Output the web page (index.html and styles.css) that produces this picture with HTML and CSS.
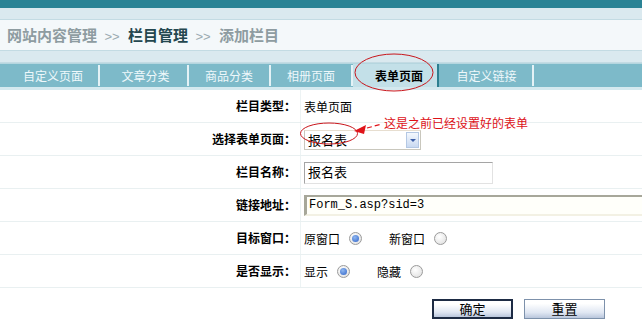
FILE: index.html
```html
<!DOCTYPE html>
<html lang="zh-CN">
<head>
    <meta charset="UTF-8">
    <title>添加栏目</title>
    <link rel="stylesheet" href="styles.css">
</head>
<body>
    <div class="topbar"></div>
    <div class="band"></div>
    <div class="crumb">
        <span class="crumb-muted">网站内容管理</span>
        <span class="crumb-sep">&gt;&gt;</span>
        <span class="crumb-current">栏目管理</span>
        <span class="crumb-sep">&gt;&gt;</span>
        <span class="crumb-muted">添加栏目</span>
    </div>
    <div class="band"></div>
    <div class="tabs">
        <div class="tab t1">自定义页面</div>
        <div class="tab t2">文章分类</div>
        <div class="tab t3">商品分类</div>
        <div class="tab t4">相册页面</div>
        <div class="tab t5 active">表单页面</div>
        <div class="tab t6">自定义链接</div>
    </div>

    <div class="form">
        <div class="row">
            <div class="label">栏目类型：</div>
            <div class="value">表单页面</div>
        </div>
        <div class="row">
            <div class="label">选择表单页面：</div>
            <div class="value">
                <div class="select">
                    <span class="select-text">报名表</span>
                    <span class="select-btn"></span>
                </div>
            </div>
        </div>
        <div class="row">
            <div class="label">栏目名称：</div>
            <div class="value"><div class="input name">报名表</div></div>
        </div>
        <div class="row">
            <div class="label">链接地址：</div>
            <div class="value"><div class="input link">Form_S.asp?sid=3</div></div>
        </div>
        <div class="row">
            <div class="label">目标窗口：</div>
            <div class="value">
                <span class="opt">原窗口</span><span class="radio checked"></span>
                <span class="opt">新窗口</span><span class="radio"></span>
            </div>
        </div>
        <div class="row">
            <div class="label">是否显示：</div>
            <div class="value">
                <span class="opt">显示</span><span class="radio checked"></span>
                <span class="opt">隐藏</span><span class="radio"></span>
            </div>
        </div>
        <div class="actions">
            <button class="btn default">确定</button>
            <button class="btn">重置</button>
        </div>
    </div>

    <div class="note">这是之前已经设置好的表单</div>
    <svg class="marks" width="642" height="324" viewBox="0 0 642 324">
        <ellipse cx="394" cy="72.5" rx="39" ry="18.5" fill="none" stroke="#c8151b" stroke-width="1"/>
        <ellipse cx="329" cy="133.5" rx="28.5" ry="10.5" fill="none" stroke="#c8151b" stroke-width="1"/>
        <polygon points="354,131 366,125 364,134" fill="#e0141a"/>
        <line x1="367" y1="128" x2="382" y2="124" stroke="#e0141a" stroke-width="1.2" stroke-dasharray="5 3"/>
    </svg>
</body>
</html>
```
FILE: styles.css
```css
body {
    margin: 0;
    font-family: "Noto Sans CJK SC", "Liberation Sans", sans-serif;
    font-size: 12px;
    color: #000;
    background: #fff;
    position: relative;
    width: 642px;
    height: 324px;
    overflow: hidden;
}
.topbar {
    height: 8px;
    background-color: #2a8395;
}
.band {
    height: 11px;
    background-color: #dae9ef;
    border-bottom: 1px solid #c3dbe3;
}
.crumb {
    height: 30px;
    line-height: 29px;
    background-color: #f4f8fa;
    border-bottom: 1px solid #c3dbe3;
    padding-left: 7px;
    font-size: 15px;
    font-weight: bold;
    white-space: nowrap;
}
.crumb-muted {
    color: #8e9ca1;
}
.crumb-sep {
    color: #9aaab0;
    font-weight: normal;
    font-family: "Liberation Sans", sans-serif;
    margin: 0 5px 0 4px;
    font-size: 13px;
}
.crumb-current {
    color: #24474f;
}
.tabs {
    display: flex;
    height: 23px;
    background-color: #7dbac9;
    border-top: 1px solid #b5d6df;
    border-bottom: 3px solid #d4e9ef;
}
.tab {
    color: #eef8fb;
    text-align: center;
    border-right: 2px solid #e4f2f6;
    margin: 1px 0;
    line-height: 21px;
    box-sizing: border-box;
}
.t1 { width: 100px; padding-left: 8px; }
.t2 { width: 89px; padding-left: 4px; }
.t3 { width: 82px; }
.t4 { width: 82px; }
.t5 { width: 86px; }
.t6 { width: 95px; padding-left: 2px; }
.tab.active {
    background-color: #c3e0e8;
    color: #000;
    font-weight: bold;
    border-right: 2px solid #2c7f90;
    margin: 0;
    line-height: 23px;
    padding-left: 8px;
}
.form {
    width: 642px;
}
.row {
    display: flex;
    height: 32px;
    border-bottom: 1px solid #e9f0f1;
}
.label {
    width: 301px;
    flex-shrink: 0;
    box-sizing: border-box;
    padding-right: 4px;
    text-align: right;
    font-weight: bold;
    line-height: 32px;
    border-right: 1px solid #edf3f4;
}
.value {
    flex: 1;
    display: flex;
    align-items: center;
    padding-left: 3px;
    white-space: nowrap;
    overflow: hidden;
}
.select {
    display: flex;
    align-items: center;
    width: 117px;
    height: 20px;
    box-sizing: border-box;
    border: 1px solid #c9c7bd;
    border-top-color: #e7ded0;
    background: #fff;
    margin-top: 1px;
}
.select-text {
    flex: 1;
    padding-left: 3px;
    font-size: 13px;
}
.select-btn {
    width: 13px;
    height: 16px;
    margin-right: 1px;
    box-sizing: border-box;
    border: 1px solid #b4c8e4;
    background: linear-gradient(#f4f8fe, #c9d9f1);
    position: relative;
}
.select-btn::after {
    content: "";
    position: absolute;
    left: 3px;
    top: 6px;
    border-left: 3px solid transparent;
    border-right: 3px solid transparent;
    border-top: 3px solid #3b5ea8;
}
.input {
    height: 22px;
    box-sizing: border-box;
    line-height: 18px;
    padding-left: 3px;
    font-size: 13px;
    flex-shrink: 0;
}
.input.name {
    width: 189px;
    border: 1px solid #e2e2e2;
    border-top: 1px solid #a5a5a5;
    border-left: 1px solid #a5a5a5;
    margin-top: 2px;
}
.input.link {
    width: 380px;
    height: 21px;
    border-top: 2px solid #a7a79a;
    border-left: 3px solid #a7a79a;
    border-bottom: 2px solid #f3f1e4;
    background: #fffffa;
    font-family: "Liberation Mono", monospace;
    font-size: 12px;
    line-height: 17px;
    padding-left: 2px;
}
.opt {
    margin-right: 9px;
}
.radio {
    display: inline-block;
    width: 13px;
    height: 13px;
    box-sizing: border-box;
    border-radius: 50%;
    border: 1px solid #9b9b9b;
    background: radial-gradient(circle at 40% 35%, #fff, #dcdcdc);
    margin-right: 27px;
    position: relative;
}
.radio.checked::after {
    content: "";
    position: absolute;
    left: 2px;
    top: 2px;
    width: 7px;
    height: 7px;
    border-radius: 50%;
    background: radial-gradient(circle at 40% 35%, #8fb7f0, #2f63c8);
}
.actions {
    display: flex;
    gap: 11px;
    padding: 11px 0 0 432px;
}
.btn {
    width: 81px;
    height: 20px;
    font-family: "Noto Sans CJK SC", sans-serif;
    font-size: 13px;
    line-height: 16px;
    padding: 0;
    border: 1px solid #7d91ab;
    background: linear-gradient(#ffffff 20%, #dfe6f2 70%, #b9c6dc);
    color: #000;
}
.btn.default {
    border: 2px solid #1d2b44;
}
.note {
    position: absolute;
    left: 384px;
    top: 115px;
    color: #dd1118;
    font-size: 12px;
    line-height: 16px;
}
.marks {
    position: absolute;
    left: 0;
    top: 0;
    pointer-events: none;
}
```
